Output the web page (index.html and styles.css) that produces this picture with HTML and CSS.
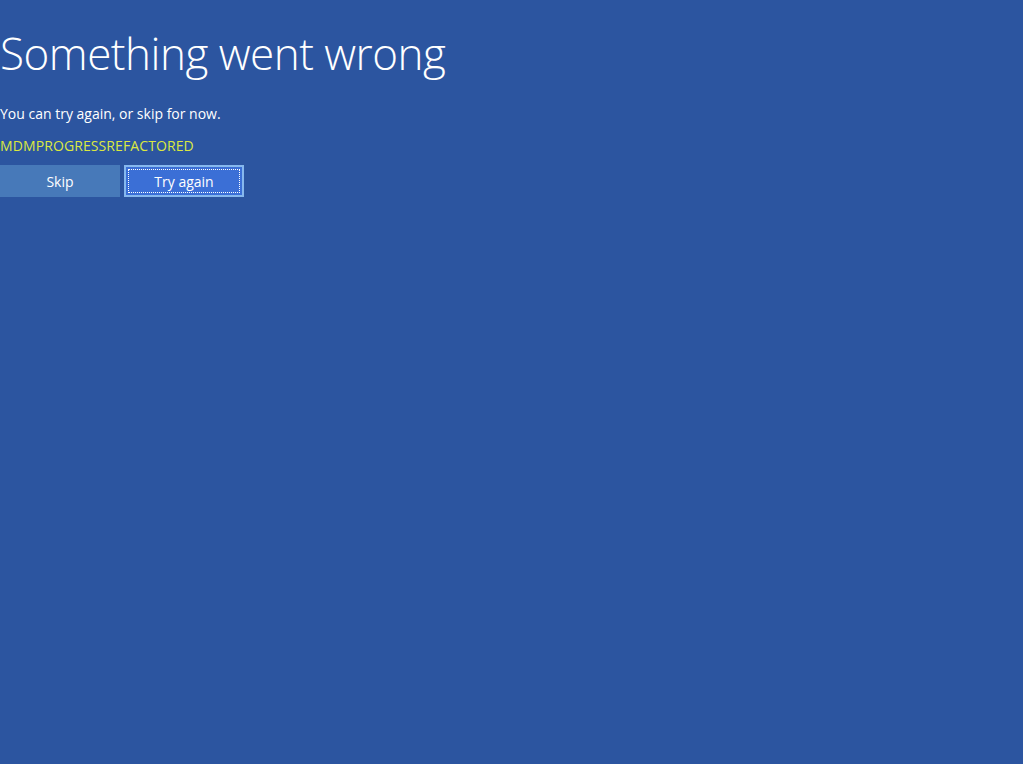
FILE: index.html
```html
<!DOCTYPE html>
<html lang="en">
<head>
  <meta charset="UTF-8">
  <title>Something went wrong</title>
  <link rel="stylesheet" href="styles.css">
</head>
<body>
  <div class="page">
    <h1 class="title">Something went wrong</h1>
    <p class="message">You can try again, or skip for now.</p>
    <p class="code">MDMPROGRESSREFACTORED</p>
    <div class="actions">
      <button class="btn btn-skip">Skip</button>
      <button class="btn btn-retry"><span class="focus">Try again</span></button>
    </div>
  </div>
</body>
</html>
```

FILE: styles.css
```css
* {
  box-sizing: border-box;
}

html,
body {
  margin: 0;
  padding: 0;
  height: 100%;
}

body {
  background: #2c55a0;
  font-family: "Open Sans", "Noto Sans", sans-serif;
  color: #fff;
}

.page {
  padding-top: 25px;
}

.title {
  margin: 0;
  font-size: 44px;
  font-weight: 300;
  line-height: 56px;
  letter-spacing: -0.5px;
}

.message {
  margin: 23px 0 0;
  font-size: 14px;
  line-height: 20px;
}

.code {
  margin: 12px 0 0;
  font-size: 14px;
  line-height: 20px;
  color: #dbe83f;
  letter-spacing: 0.1px;
}

.actions {
  display: flex;
  gap: 4px;
  margin-top: 9px;
}

.btn {
  width: 120px;
  height: 32px;
  border: none;
  padding: 0;
  font-family: inherit;
  font-size: 14px;
  color: #fff;
  cursor: pointer;
}

.btn-skip {
  background: #4779b9;
}

.btn-retry {
  background: #3b6fd6;
  border: 2px solid #86b8ee;
  padding: 2px;
}

.focus {
  display: flex;
  align-items: center;
  justify-content: center;
  height: 100%;
  border: 1px dotted #fff;
}
```
